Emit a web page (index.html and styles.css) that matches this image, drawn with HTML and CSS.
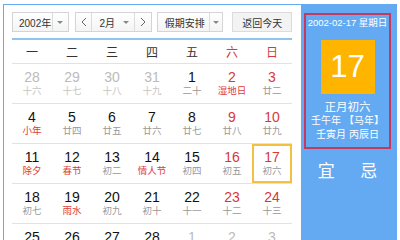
FILE: index.html
```html
<!doctype html>
<html lang="zh-CN">
    <head>
        <title>万年历</title>
        <meta http-equiv='Content-Type' content='text/html; charset=utf-8'>
        <meta name="viewport" content="width=device-width, initial-scale=1">
        <link rel="stylesheet" href="styles.css">
    </head>
    <body>
        <div class="widget">
            <div class="cal">
                <div class="toolbar">
                    <div class="sel year">
                        <span class="val">2002年</span>
                        <span class="drop"><i class="caret"></i></span>
                    </div>
                    <div class="month-group">
                        <span class="step"><svg width="6" height="10" viewBox="0 0 6 10"><polyline points="5,1 1,5 5,9" fill="none" stroke="#666" stroke-width="1"/></svg></span>
                        <span class="month">2月<i class="caret"></i></span>
                        <span class="step"><svg width="6" height="10" viewBox="0 0 6 10"><polyline points="1,1 5,5 1,9" fill="none" stroke="#666" stroke-width="1"/></svg></span>
                    </div>
                    <div class="sel holiday">
                        <span class="val">假期安排</span>
                        <span class="drop"><i class="caret"></i></span>
                    </div>
                    <button class="today">返回今天</button>
                </div>

                <div class="week">
                    <span>一</span><span>二</span><span>三</span><span>四</span><span>五</span>
                    <span class="red">六</span><span class="red">日</span>
                </div>

                <div class="row">
                    <div class="day other"><b>28</b><small>十六</small></div>
                    <div class="day other"><b>29</b><small>十七</small></div>
                    <div class="day other"><b>30</b><small>十八</small></div>
                    <div class="day other"><b>31</b><small>十九</small></div>
                    <div class="day"><b>1</b><small>二十</small></div>
                    <div class="day weekend"><b>2</b><small class="fest">湿地日</small></div>
                    <div class="day weekend"><b>3</b><small>廿二</small></div>
                </div>
                <div class="row">
                    <div class="day"><b>4</b><small class="fest">小年</small></div>
                    <div class="day"><b>5</b><small>廿四</small></div>
                    <div class="day"><b>6</b><small>廿五</small></div>
                    <div class="day"><b>7</b><small>廿六</small></div>
                    <div class="day"><b>8</b><small>廿七</small></div>
                    <div class="day weekend"><b>9</b><small>廿八</small></div>
                    <div class="day weekend"><b>10</b><small>廿九</small></div>
                </div>
                <div class="row">
                    <div class="day"><b>11</b><small class="fest">除夕</small></div>
                    <div class="day"><b>12</b><small class="fest">春节</small></div>
                    <div class="day"><b>13</b><small>初二</small></div>
                    <div class="day"><b>14</b><small class="fest">情人节</small></div>
                    <div class="day"><b>15</b><small>初四</small></div>
                    <div class="day weekend"><b>16</b><small>初五</small></div>
                    <div class="day weekend selected"><b>17</b><small>初六</small></div>
                </div>
                <div class="row">
                    <div class="day"><b>18</b><small>初七</small></div>
                    <div class="day"><b>19</b><small class="fest">雨水</small></div>
                    <div class="day"><b>20</b><small>初九</small></div>
                    <div class="day"><b>21</b><small>初十</small></div>
                    <div class="day"><b>22</b><small>十一</small></div>
                    <div class="day weekend"><b>23</b><small>十二</small></div>
                    <div class="day weekend"><b>24</b><small>十三</small></div>
                </div>
                <div class="row">
                    <div class="day"><b>25</b><small>十四</small></div>
                    <div class="day"><b>26</b><small>十五</small></div>
                    <div class="day"><b>27</b><small>十六</small></div>
                    <div class="day"><b>28</b><small>十七</small></div>
                    <div class="day other"><b>1</b><small>十八</small></div>
                    <div class="day other"><b>2</b><small>十九</small></div>
                    <div class="day other"><b>3</b><small>二十</small></div>
                </div>
            </div>

            <div class="side">
                <div class="today-box">
                    <div class="date">2002-02-17 星期日</div>
                    <div class="big">17</div>
                    <div class="lunar">正月初六</div>
                    <div class="ganzhi">壬午年 【马年】</div>
                    <div class="ganzhi">壬寅月 丙辰日</div>
                </div>
                <div class="yiji">
                    <span>宜</span>
                    <span>忌</span>
                </div>
            </div>
        </div>
    </body>
</html>
```

FILE: styles.css
```css
html, body {
    margin: 0;
    overflow: hidden;
    height: 240px;
}
body {
    font-family: "Liberation Sans", "Noto Sans CJK SC", sans-serif;
    background: #fff;
    color: #222;
}
.widget {
    display: flex;
    box-sizing: border-box;
    width: 394px;
    height: 300px;
    margin: 4px 0 0 3px;
    border: 1px solid #64aaf3;
}
.cal {
    width: 297px;
    box-sizing: border-box;
    padding: 7px 9px 0 8px;
}

/* toolbar */
.toolbar {
    display: flex;
    height: 20px;
    font-size: 10px;
    color: #333;
    white-space: nowrap;
}
.sel, .month-group {
    display: flex;
    box-sizing: border-box;
    height: 20px;
    border: 1px solid #d4d4d4;
    background: linear-gradient(#fff, #f4f4f4);
}
.val {
    display: flex;
    align-items: center;
    padding-left: 7px;
    border-right: 1px solid #dcdcdc;
}
.drop {
    flex: 1;
    display: flex;
    align-items: center;
    justify-content: center;
}
.caret {
    width: 0;
    height: 0;
    border-left: 3px solid transparent;
    border-right: 3px solid transparent;
    border-top: 3px solid #888;
}
.year {
    width: 57px;
}
.year .val {
    width: 40px;
    box-sizing: border-box;
    padding-left: 6px;
}
.month-group {
    width: 77px;
    margin-left: 6px;
}
.step {
    width: 16px;
    display: flex;
    align-items: center;
    justify-content: center;
}
.month {
    width: 44px;
    box-sizing: border-box;
    display: flex;
    align-items: center;
    justify-content: space-between;
    padding: 0 5px 0 7px;
    border-left: 1px solid #dcdcdc;
    border-right: 1px solid #dcdcdc;
}
.holiday {
    width: 67px;
    margin-left: 5px;
}
.holiday .val {
    width: 52px;
    box-sizing: border-box;
}
.today {
    width: 60px;
    height: 20px;
    margin-left: 9px;
    padding: 0;
    border: 1px solid #dcdcdc;
    background: #f3f3f3;
    font: inherit;
    color: #333;
}

/* grid */
.week, .row {
    display: grid;
    grid-template-columns: repeat(7, 40px);
    width: 280px;
}
.week {
    margin-top: 6px;
    height: 23px;
    align-items: center;
    border-top: 2px solid #92c4f2;
    border-bottom: 1px solid #e2e2e2;
    font-size: 12px;
    color: #333;
    text-align: center;
}
.red {
    color: #d9383a;
}
.row {
    height: 39px;
    border-bottom: 1px solid #e2e2e2;
}
.day {
    display: flex;
    flex-direction: column;
    align-items: center;
    padding-top: 5px;
    box-sizing: border-box;
}
.day b {
    font-weight: normal;
    font-size: 14px;
    line-height: 16px;
    color: #111;
}
.day small {
    font-size: 9.5px;
    line-height: 12px;
    color: #999;
}
.day.weekend b {
    color: #d9383a;
}
.day small.fest {
    color: #e03a3a;
}
.day.other b {
    color: #bbb;
}
.day.other small {
    color: #c4c4c4;
}
.selected {
    box-shadow: inset 0 0 0 2px #f3c03f;
}

/* side panel */
.side {
    width: 95px;
    background: #64aaf3;
    color: #fff;
}
.today-box {
    margin: 8px 5px 0 3px;
    height: 136px;
    box-sizing: border-box;
    border: 2px solid #c43a5e;
    display: flex;
    flex-direction: column;
    align-items: center;
}
.date {
    margin-top: 1px;
    font-size: 9.5px;
    line-height: 14px;
}
.big {
    width: 54px;
    height: 54px;
    margin-top: 10px;
    background: #ffb400;
    font-size: 31px;
    line-height: 54px;
    text-align: center;
}
.lunar {
    margin-top: 6px;
    font-size: 11.5px;
    line-height: 14px;
}
.ganzhi {
    font-size: 10px;
    line-height: 14px;
}
.yiji {
    display: flex;
    justify-content: space-around;
    padding: 0 6px 0 4px;
    margin-top: 13px;
    font-size: 17px;
    line-height: 20px;
}
```
